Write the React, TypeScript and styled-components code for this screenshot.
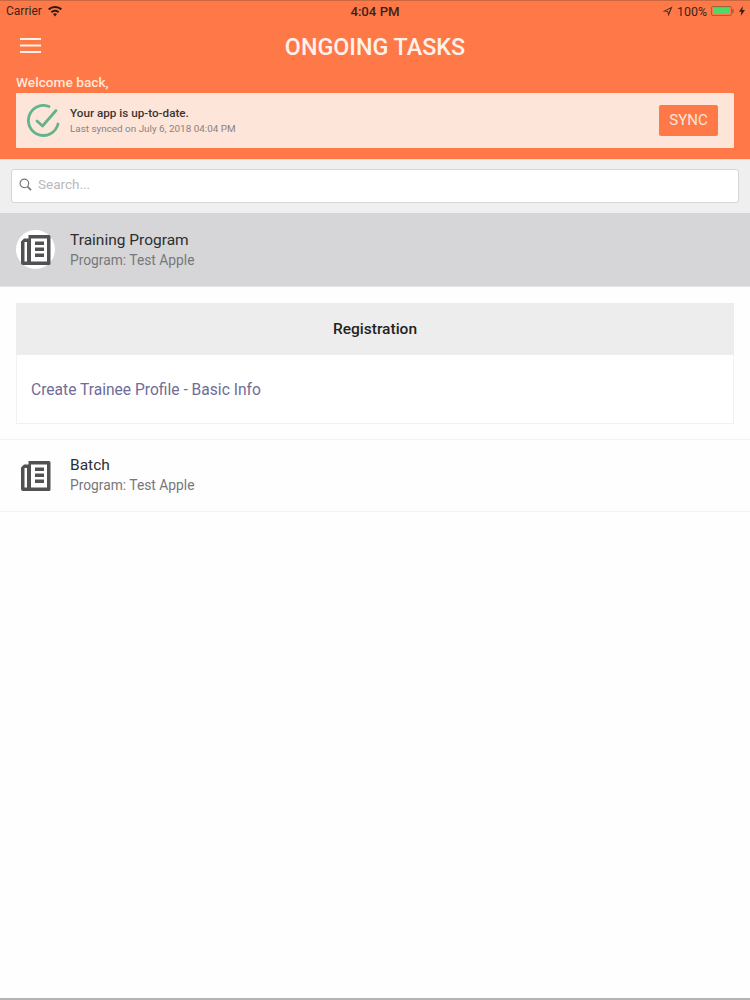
import * as React from 'react';
import styled, { createGlobalStyle } from 'styled-components';

const GlobalStyle = createGlobalStyle`
	html, body {
		margin: 0;
		padding: 0;
		background: #fff;
		font-family: Roboto, 'Liberation Sans', sans-serif;
	}
	* {
		box-sizing: border-box;
	}
`;

const Page = styled.div`
	width: 750px;
	height: 1000px;
	display: flex;
	flex-direction: column;
	overflow: hidden;
	background: #fefefe;
`;

const Header = styled.header`
	height: 160px;
	background: #ff7847;
	border-top: 1px solid #c9683f;
	border-bottom: 1px solid #fcd9cc;
	display: flex;
	flex-direction: column;
`;

const StatusBar = styled.div`
	height: 20px;
	padding: 0 6px;
	display: flex;
	align-items: center;
	justify-content: space-between;
	font-size: 12px;
	color: #3a2419;
`;

const StatusGroup = styled.div`
	width: 200px;
	display: flex;
	align-items: center;
	gap: ${props => (props.$right ? '4px' : '6px')};
	justify-content: ${props => (props.$right ? 'flex-end' : 'flex-start')};
`;

const Clock = styled.span`
	font-weight: 500;
	font-size: 13.200px;
`;

const BatteryLevel = styled.span`
	font-size: 12.400px;
`;

const Battery = styled.span`
	width: 21px;
	height: 10px;
	border: 1px solid #8f6a3f;
	border-radius: 2px;
	padding: 1px;
	display: block;
	position: relative;
	&::before {
		content: '';
		display: block;
		height: 100%;
		background: #50d768;
		border-radius: 1px;
	}
	&::after {
		content: '';
		position: absolute;
		right: -3px;
		top: 2px;
		width: 2px;
		height: 4px;
		background: #b0683f;
	}
`;

const Bolt = styled.svg`
	margin-left: 3px;
	margin-right: -1px;
`;

const TitleBar = styled.div`
	height: 52px;
	padding: 0 20px;
	display: flex;
	align-items: center;
	position: relative;
`;

const Hamburger = styled.svg`
	margin-bottom: 4px;
`;

const Title = styled.h1`
	position: absolute;
	left: 0;
	right: 0;
	margin: 0;
	text-align: center;
	font-size: 23.300px;
	font-weight: 500;
	color: #fff2ea;
`;

const Welcome = styled.div`
	padding-left: 16px;
	font-size: 13.700px;
	line-height: 17px;
	margin-top: 1px;
	font-weight: 500;
	color: #ffe6d9;
`;

const SyncCard = styled.div`
	margin: 2px 16px 0;
	height: 55px;
	background: #fde5d9;
	border-radius: 1px;
	display: flex;
	align-items: center;
	padding: 0 16px 0 11px;
`;

const SyncText = styled.div`
	flex: 1;
	margin-left: 10px;
	padding-bottom: 2px;
`;

const SyncTitle = styled.div`
	font-size: 11.700px;
	line-height: 16px;
	font-weight: 500;
	color: #3d3533;
`;

const SyncDate = styled.div`
	font-size: 9.900px;
	line-height: 13px;
	margin-top: 1px;
	color: #8b8280;
`;

const SyncButton = styled.button`
	width: 59px;
	height: 31px;
	border: none;
	border-radius: 2px;
	background: #ff7847;
	color: #fde5d9;
	font-family: inherit;
	font-size: 15px;
	font-weight: 400;
	padding: 0 0 2px;
`;

const SearchSection = styled.div`
	height: 53px;
	background: #efeff0;
	padding: 9px 11px 10px;
`;

const SearchBox = styled.div`
	height: 34px;
	background: #fff;
	border: 1px solid #d5d5d7;
	border-radius: 3px;
	display: flex;
	align-items: center;
	padding: 0 0 3px 7px;
	gap: 6px;
	font-size: 13.500px;
	color: #b9b9bd;
`;

const Placeholder = styled.span`
	margin-bottom: 2px;
`;

const Row = styled.div`
	height: ${props => (props.$active ? '74px' : '73px')};
	display: flex;
	align-items: center;
	padding-left: 16px;
	background: ${props => (props.$active ? '#d6d6d8' : '#fefefe')};
	border-bottom: 1px solid ${props => (props.$active ? '#e4e4e6' : '#f3f3f3')};
	border-top: ${props => (props.$active ? 'none' : '1px solid #f3f3f3')};
`;

const IconWrap = styled.div`
	width: 39px;
	height: 39px;
	border-radius: 50%;
	background: ${props => (props.$active ? '#fff' : 'transparent')};
	display: flex;
	align-items: center;
	justify-content: center;
`;

const RowText = styled.div`
	margin-left: 15px;
	padding-bottom: ${props => (props.$active ? '0' : '2px')};
`;

const RowTitle = styled.div`
	font-size: 15.500px;
	line-height: 20px;
	color: #2c2f30;
`;

const RowSub = styled.div`
	font-size: 13.800px;
	line-height: 17px;
	margin-top: 2px;
	color: #76787a;
`;

const Panel = styled.section`
	margin: 16px 16px 15px;
`;

const PanelHeader = styled.div`
	height: 52px;
	background: #eeeded;
	display: flex;
	align-items: center;
	justify-content: center;
	font-size: 15.500px;
	font-weight: 500;
	color: #1f2423;
`;

const PanelBody = styled.div`
	height: 69px;
	background: #fff;
	border: 1px solid #f1f1f1;
	border-top: none;
	display: flex;
	align-items: center;
	padding: 2px 0 0 14px;
	font-size: 15.600px;
	color: #6f6d98;
`;

const BottomLine = styled.div`
	margin-top: auto;
	height: 2px;
	background: #b4b4b4;
`;

const NewsIcon = () => (
	<svg width='30' height='30' viewBox='0 0 30 30'>
		<path
			fill='#515153'
			fillRule='evenodd'
			d='M7.500 0H28a1.500 1.500 0 0 1 1.500 1.500v27A1.500 1.500 0 0 1 28 30H2a2 2 0 0 1-2-2V6.500L3 3.500h4.500V0zM3.500 7v19.500H6V7H3.500zM10 3.500v23h16v-23H10z'
		/>
		<path fill='#515153' d='M14 6.500h9V10h-9zM14 12.500h9V16h-9zM14 18.500h9V22h-9z' />
	</svg>
);

const App = () => (
	<Page>
		<GlobalStyle />
		<Header>
			<StatusBar>
				<StatusGroup>
					<span>Carrier</span>
					<svg width='14' height='11' viewBox='0 0 14 11' fill='#2e1c12'>
						<path d='M7 0c2.700 0 5.100 1 7 2.800L12.700 4.200A8.200 8.200 0 0 0 7 2 8.200 8.200 0 0 0 1.300 4.200L0 2.800A10 10 0 0 1 7 0z' />
						<path d='M7 3.800c1.600 0 3.100.6 4.300 1.700L10 6.900A4.500 4.500 0 0 0 7 5.700a4.500 4.500 0 0 0-3 1.200L2.700 5.500A6.300 6.300 0 0 1 7 3.800z' />
						<path d='M7 7.300c.8 0 1.500.3 2 .8L7 10.500 5 8.100c.5-.5 1.200-.8 2-.8z' />
					</svg>
				</StatusGroup>
				<Clock>4:04 PM</Clock>
				<StatusGroup $right>
					<svg width='11' height='11' viewBox='0 0 11 11' fill='#4a2e1e'>
						<path d='M10.500.5 6.500 10.500 5.300 5.700.5 5.500zM8.300 2.700 3.800 4.800l2.300.1.500 2.200z' fillRule='evenodd' />
					</svg>
					<BatteryLevel>100%</BatteryLevel>
					<Battery />
					<Bolt width='6' height='10' viewBox='0 0 6 10' fill='#3a2419'>
						<path d='M3.800 0 0 5.800h2.300L1.800 10 6 3.900H3.400z' />
					</Bolt>
				</StatusGroup>
			</StatusBar>
			<TitleBar>
				<Hamburger width='21' height='15' viewBox='0 0 21 15' fill='#fff0e8'>
					<path d='M0 0h21v2H0zM0 6.500h21v2H0zM0 13h21v2H0z' />
				</Hamburger>
				<Title>ONGOING TASKS</Title>
			</TitleBar>
			<Welcome>Welcome back,</Welcome>
			<SyncCard>
				<svg width='33' height='33' viewBox='0 0 33 33' fill='none' stroke='#62b48c' strokeWidth='2.800' strokeLinecap='round' strokeLinejoin='round'>
					<path d='M31 20A15 15 0 1 1 22 2.500' />
					<path d='M10 17l5.500 5L29 6.500' />
				</svg>
				<SyncText>
					<SyncTitle>Your app is up-to-date.</SyncTitle>
					<SyncDate>Last synced on July 6, 2018 04:04 PM</SyncDate>
				</SyncText>
				<SyncButton>SYNC</SyncButton>
			</SyncCard>
		</Header>
		<SearchSection>
			<SearchBox>
				<svg width='13' height='13' viewBox='0 0 14 14' fill='none' stroke='#77777b' strokeWidth='1.300'>
					<circle cx='5.800' cy='5.800' r='4.600' />
					<path d='M9.200 9.200 13 13' strokeWidth='1.800' />
				</svg>
				<Placeholder>Search...</Placeholder>
			</SearchBox>
		</SearchSection>
		<Row $active>
			<IconWrap $active>
				<NewsIcon />
			</IconWrap>
			<RowText $active>
				<RowTitle>Training Program</RowTitle>
				<RowSub>Program: Test Apple</RowSub>
			</RowText>
		</Row>
		<Panel>
			<PanelHeader>Registration</PanelHeader>
			<PanelBody>Create Trainee Profile - Basic Info</PanelBody>
		</Panel>
		<Row>
			<IconWrap>
				<NewsIcon />
			</IconWrap>
			<RowText>
				<RowTitle>Batch</RowTitle>
				<RowSub>Program: Test Apple</RowSub>
			</RowText>
		</Row>
		<BottomLine />
	</Page>
);

export default App;
